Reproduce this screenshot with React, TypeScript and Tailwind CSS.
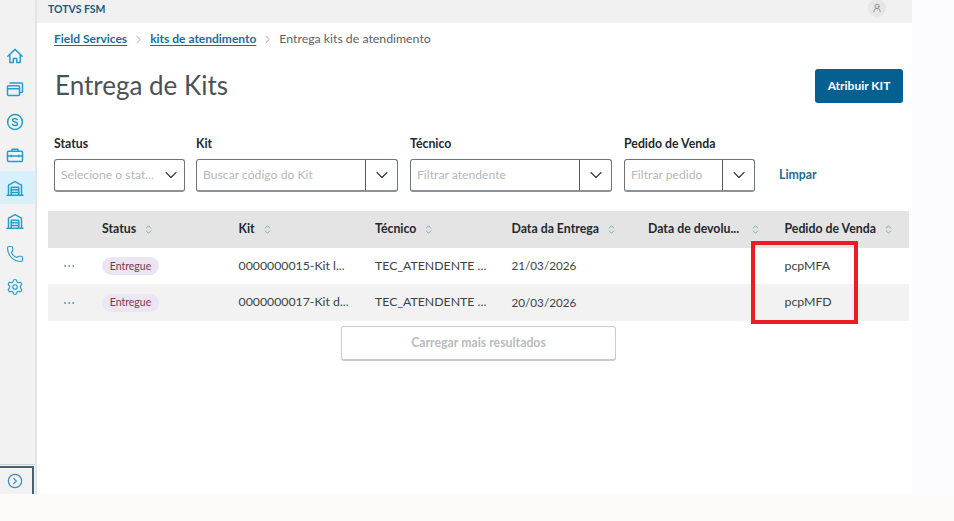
import { Phone, Settings, ChevronDown, ChevronRight, ChevronsUpDown, UserRound, CircleChevronRight, Ellipsis } from "lucide-react";
import type { ReactNode } from "react";

function Ico({ children }: { children: ReactNode }) {
  return (
    <svg width="18" height="18" viewBox="0 0 18 18" fill="none" stroke="#259fc9" strokeWidth="1.5" strokeLinejoin="round" strokeLinecap="round">
      {children}
    </svg>
  );
}

const Garage = () => (
  <Ico>
    <path d="M1 16.2h16" />
    <path d="M2.5 16V6.2L9 2.6l6.5 3.6V16" />
    <path d="M5.3 16V8.2h7.4V16" />
    <path d="M5.3 10.8h7.4M5.3 13.4h7.4" />
  </Ico>
);

const nav: { el: ReactNode; active?: boolean }[] = [
  {
    el: (
      <Ico>
        <path d="M1.8 9.2 9 2.4l7.2 6.8" />
        <path d="M3.8 8v7.6h3.5v-4.2h3.4v4.2h3.5V8" />
      </Ico>
    ),
  },
  {
    el: (
      <Ico>
        <rect x="1.5" y="5.8" width="12" height="9.7" rx="1" />
        <path d="M1.5 8.8h12" />
        <path d="M4 3h11.5a1 1 0 0 1 1 1v7.5a1 1 0 0 1-1 1h-2" />
      </Ico>
    ),
  },
  {
    el: (
      <Ico>
        <circle cx="9" cy="9" r="7.4" />
        <path d="M11.3 6.6C10.8 5.7 10 5.4 9 5.4c-1.3 0-2.4.6-2.4 1.8 0 2.6 4.9 1.1 4.9 3.6 0 1.2-1.2 1.8-2.5 1.8-1.1 0-2-.4-2.5-1.3" />
      </Ico>
    ),
  },
  {
    el: (
      <Ico>
        <rect x="1.5" y="5.3" width="15" height="10.2" rx="1" />
        <path d="M6 5.3V3.2h6v2.1" />
        <path d="M1.5 10h15" />
        <path d="M5.2 9.3v1.4M12.8 9.3v1.4" />
      </Ico>
    ),
  },
  { el: <Garage />, active: true },
  { el: <Garage /> },
  { el: <Phone size={18} strokeWidth={1.5} color="#259fc9" /> },
  { el: <Settings size={18} strokeWidth={1.5} color="#259fc9" /> },
];

function Sort() {
  return <ChevronsUpDown size={11} strokeWidth={1.5} color="#4f88a3" className="shrink-0" />;
}

function Combo({ label, placeholder, width, split }: { label: string; placeholder: string; width: string; split: boolean }) {
  return (
    <div className={`flex flex-col gap-[5px] ${width}`}>
      <span className="h-[20px] text-[12.3px] leading-[20px] font-bold text-[#24292c]">{label}</span>
      <div className="flex h-[33px] items-stretch rounded-[3px] border border-[#6f7477] border-b-2 border-b-[#8d9194] bg-white">
        <span className="min-w-0 flex-1 overflow-hidden whitespace-nowrap pl-[6px] pt-[6px] text-[12.2px] leading-[18px] text-[#b5b8ba]">{placeholder}</span>
        <span className={`flex shrink-0 items-center justify-center ${split ? "w-[32px] border-l border-[#55595c]" : "w-[26px]"}`}>
          <ChevronDown size={20} strokeWidth={1.3} color="#33383b" />
        </span>
      </div>
    </div>
  );
}

const columns = ["Status", "Kit", "Técnico", "Data da Entrega", "Data de devolu...", "Pedido de Venda"];
const rows = [
  { kit: "0000000015-Kit l...", date: "21/03/2026", order: "pcpMFA", bg: "bg-white", h: "h-[36px]" },
  { kit: "0000000017-Kit d...", date: "20/03/2026", order: "pcpMFD", bg: "bg-[#f2f2f2]", h: "h-[37px]" },
];

export default function App() {
  return (
    <div className="relative flex h-[521px] w-[954px] flex-col overflow-hidden bg-[#fdfbf9] font-['Lato','Liberation_Sans',sans-serif]">
      <div className="flex h-[494px] shrink-0 bg-[#fcfcff]">
        <div className="flex w-[912px] shrink-0">
          <aside className="flex w-[37px] shrink-0 flex-col border-r-2 border-[#e4e4e4] bg-[#f2f2f2] pt-[39px]">
            {nav.map((n, i) => (
              <div key={i} className={`flex h-[33px] items-center justify-center pr-[5px] ${n.active ? "bg-[#d9effa]" : ""}`}>
                {n.el}
              </div>
            ))}
            <div className="mt-auto h-[30px] border-t border-[#cfcfcf] pt-[1px]">
              <div className="flex h-[28px] w-[34px] items-center justify-center rounded-tr-[1px] border-r-2 border-t-2 border-[#46606f] pr-[3px]">
                <CircleChevronRight size={16} strokeWidth={1.8} color="#3f8cb5" />
              </div>
            </div>
          </aside>
          <main className="flex min-w-0 flex-1 flex-col bg-white">
            <header className="flex h-[23px] items-center justify-between overflow-hidden bg-[#f1f1f1] pl-[11px] pr-[26px]">
              <span className="-mt-[4px] text-[10.5px] font-bold text-[#24587a]">TOTVS FSM</span>
              <span className="-mt-[7px] flex h-[18px] w-[18px] items-center justify-center rounded-full bg-[#e6e6e6]">
                <UserRound size={10} strokeWidth={1.6} color="#6b6f72" />
              </span>
            </header>
            <nav className="flex h-[31px] items-center pl-[17px] pt-[1px] text-[12px]">
              <a className="font-bold text-[#1b6d99] underline underline-offset-2">Field Services</a>
              <ChevronRight size={13} strokeWidth={1.3} color="#7d8488" className="mx-[5px]" />
              <a className="font-bold text-[#1b6d99] underline underline-offset-2">kits de atendimento</a>
              <ChevronRight size={13} strokeWidth={1.3} color="#7d8488" className="mx-[5px]" />
              <span className="text-[12.3px] text-[#5b6266]">Entrega kits de atendimento</span>
            </nav>
            <div className="flex h-[49px] items-center justify-between pl-[18px] pr-[9px] pt-[15px]">
              <h1 className="-mt-[2px] text-[26px] font-normal leading-[34px] text-[#4b5257]">Entrega de Kits</h1>
              <button className="flex h-[34px] w-[88px] items-center justify-center rounded-[3px] bg-[#045f92] text-[12px] font-bold text-white">Atribuir KIT</button>
            </div>
            <div className="flex h-[91px] items-end pb-[2px]">
              <div className="flex pl-[17px]">
                <Combo label="Status" placeholder="Selecione o stat..." width="w-[131px] mr-[11px]" split={false} />
                <Combo label="Kit" placeholder="Buscar código do Kit" width="w-[202px] mr-[12px]" split />
                <Combo label="Técnico" placeholder="Filtrar atendente" width="w-[202px] mr-[12px]" split />
                <Combo label="Pedido de Venda" placeholder="Filtrar pedido" width="w-[131px] mr-[24px]" split />
                <div className="flex items-center pt-[24px] text-[12.3px] font-bold text-[#1b6d99]">Limpar</div>
              </div>
            </div>
            <div className="ml-[11px] mt-[17px] w-[861px] text-[12.3px] text-[#3c4245]">
              <div className="grid h-[37px] grid-cols-[54px_repeat(6,136.5px)] items-center bg-[#e4e4e4] font-bold text-[#24292c]">
                <span />
                {columns.map((c) => (
                  <span key={c} className="flex items-center gap-[7px] pr-[5px]">
                    <span className={c.startsWith("Data de") ? "w-[95px] whitespace-nowrap" : "whitespace-nowrap"}>{c}</span>
                    <Sort />
                  </span>
                ))}
              </div>
              {rows.map((r) => (
                <div key={r.order} className={`grid grid-cols-[54px_repeat(6,136.5px)] items-center ${r.bg} ${r.h}`}>
                  <span className="flex justify-center pr-[13px]">
                    <Ellipsis size={14} strokeWidth={1.3} color="#5b8aa6" />
                  </span>
                  <span>
                    <span className="inline-flex h-[18px] w-[57px] items-center justify-center rounded-full bg-[#ebe5f5] text-[10.5px] text-[#7a3a44]">Entregue</span>
                  </span>
                  <span className="whitespace-nowrap">{r.kit}</span>
                  <span className="whitespace-nowrap">TEC_ATENDENTE ...</span>
                  <span className="text-[11.7px]">{r.date}</span>
                  <span />
                  <span>{r.order}</span>
                </div>
              ))}
            </div>
            <div className="ml-[304px] mt-[5px] flex h-[35px] w-[275px] items-center justify-center rounded-[3px] border border-[#c9cccd] border-b-2 text-[12.3px] font-bold text-[#b9bcbe]">
              Carregar mais resultados
            </div>
          </main>
        </div>
      </div>
      <div className="absolute left-[751px] top-[241px] h-[83px] w-[107px] border-[4px] border-[#ed1c24]" />
    </div>
  );
}
